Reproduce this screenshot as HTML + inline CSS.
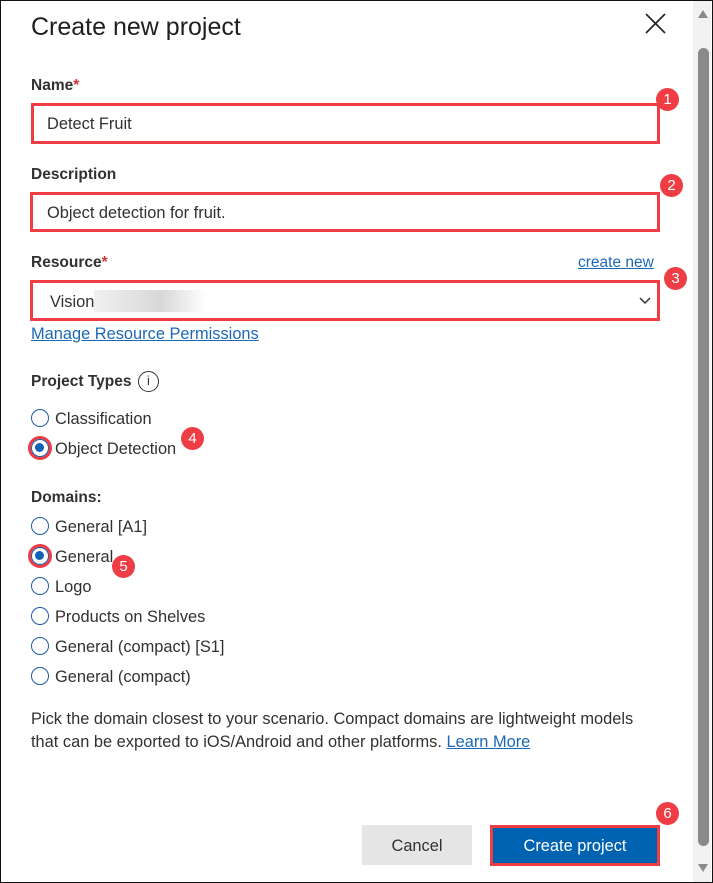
<!DOCTYPE html>
<html><head><style>
*{margin:0;padding:0;box-sizing:border-box}
body{width:713px;height:883px;position:relative;background:#fff;font-family:"Liberation Sans",sans-serif;color:#323130;overflow:hidden}
.a{position:absolute;white-space:nowrap}
.frame{position:absolute;left:0;top:0;width:713px;height:883px;border:1.5px solid #111;pointer-events:none}
.lbl{font-weight:bold;font-size:15.5px}
.box{position:absolute;border:3px solid #ee3d45}
.txt{font-size:16.4px}
.badge{position:absolute;width:23px;height:23px;border-radius:50%;background:#ee3d45;color:#fff;font-size:15px;text-align:center;line-height:23px}
.r{position:absolute;width:18px;height:18px;border-radius:50%;border:1.5px solid #1a5ba6;background:#fff}
.r.on::after{content:"";position:absolute;left:3px;top:3px;width:9px;height:9px;border-radius:50%;background:#0f62b8}
.ring{position:absolute;width:24px;height:24px;border-radius:50%;border:3px solid #ee3d45}
.link{color:#1c68b8;text-decoration:underline}
</style></head><body>
<div class="a" style="left:31px;top:13px;font-size:25px;color:#201f1e">Create new project</div>
<svg class="a" style="left:645px;top:13px" width="21" height="21"><path d="M1 1L20 20M20 1L1 20" stroke="#222" stroke-width="1.6"/></svg>

<div class="a lbl" style="left:31px;top:77px">Name<span style="color:#d13438">*</span></div>
<div class="box" style="left:31px;top:103px;width:629px;height:41px"></div>
<div class="a txt" style="left:47px;top:115px">Detect Fruit</div>
<div class="badge" style="left:656px;top:88px">1</div>

<div class="a lbl" style="left:31px;top:166px">Description</div>
<div class="box" style="left:30px;top:192px;width:630px;height:40px"></div>
<div class="a txt" style="left:47px;top:204px">Object detection for fruit.</div>
<div class="badge" style="left:660px;top:174px">2</div>

<div class="a lbl" style="left:31px;top:254px">Resource<span style="color:#d13438">*</span></div>
<div class="a link" style="left:578px;top:254px;font-size:15.5px">create new</div>
<div class="box" style="left:30px;top:280px;width:630px;height:41px"></div>
<div class="a txt" style="left:50px;top:293px">Vision</div>
<div class="a" style="left:94px;top:290px;width:112px;height:22px;background:linear-gradient(90deg,#f0f0f0,#d8d8d8 60%,#fff)"></div>
<svg class="a" style="left:639px;top:297px" width="12" height="8"><path d="M1 1L6 6L11 1" stroke="#333" stroke-width="1.5" fill="none"/></svg>
<div class="badge" style="left:664px;top:267px">3</div>
<div class="a link" style="left:31px;top:325px;font-size:16.4px">Manage Resource Permissions</div>

<div class="a lbl" style="left:31px;top:373px">Project Types</div>
<div class="a" style="left:138px;top:371px;width:21px;height:21px;border:1.5px solid #333;border-radius:50%;font-size:13px;text-align:center;line-height:18px">i</div>

<div class="r" style="left:31px;top:409px"></div><div class="a txt" style="left:55px;top:410px">Classification</div>
<div class="ring" style="left:28px;top:436px"></div><div class="r on" style="left:31px;top:439px"></div><div class="a txt" style="left:55px;top:440px">Object Detection</div>
<div class="badge" style="left:181px;top:427px">4</div>

<div class="a lbl" style="left:31px;top:489px">Domains:</div>
<div class="r" style="left:31px;top:517px"></div><div class="a txt" style="left:55px;top:518px">General [A1]</div>
<div class="ring" style="left:28px;top:544px"></div><div class="r on" style="left:31px;top:547px"></div><div class="a txt" style="left:55px;top:548px">General</div>
<div class="badge" style="left:112px;top:555px">5</div>
<div class="r" style="left:31px;top:577px"></div><div class="a txt" style="left:55px;top:578px">Logo</div>
<div class="r" style="left:31px;top:607px"></div><div class="a txt" style="left:55px;top:608px">Products on Shelves</div>
<div class="r" style="left:31px;top:637px"></div><div class="a txt" style="left:55px;top:638px">General (compact) [S1]</div>
<div class="r" style="left:31px;top:667px"></div><div class="a txt" style="left:55px;top:668px">General (compact)</div>

<div class="a" style="left:31px;top:708px;line-height:23px;font-size:16.4px">Pick the domain closest to your scenario. Compact domains are lightweight models<br>that can be exported to iOS/Android and other platforms. <span class="link">Learn More</span></div>

<div class="a txt" style="left:362px;top:825px;width:110px;height:40px;background:#e5e5e5;text-align:center;line-height:42px">Cancel</div>
<div class="a txt" style="left:490px;top:825px;width:170px;height:41px;background:#0063b1;border:3px solid #ee3d45;color:#fff;text-align:center;line-height:37px">Create project</div>
<div class="badge" style="left:656px;top:802px">6</div>

<div class="a" style="left:693px;top:1px;width:18px;height:881px;background:#f1f1f1"></div>
<svg class="a" style="left:697px;top:9px" width="12" height="10"><path d="M6 1L11 9H1Z" fill="#8a8a8a"/></svg>
<div class="a" style="left:698px;top:48px;width:11px;height:798px;background:#8a8a8a;border-radius:6px"></div>
<svg class="a" style="left:697px;top:863px" width="12" height="10"><path d="M1 1H11L6 9Z" fill="#8a8a8a"/></svg>
<div class="frame"></div>
</body></html>
